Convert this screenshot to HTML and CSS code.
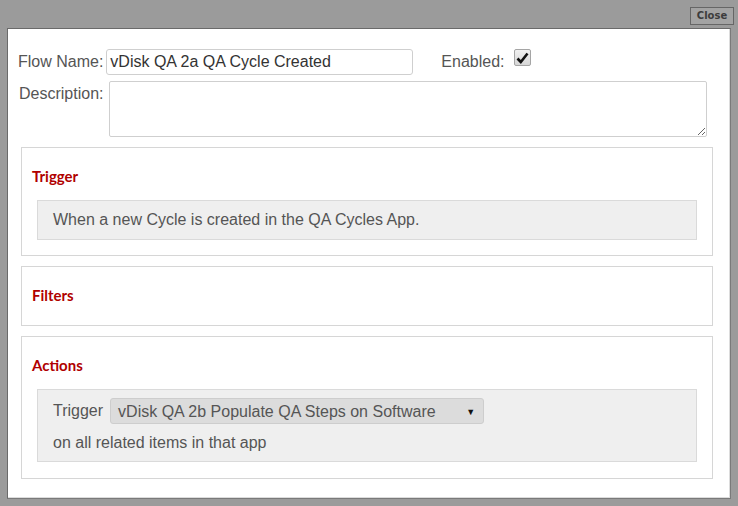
FILE: index.html
```html
<!DOCTYPE html>
<html>
<head>
<meta charset="utf-8">
<link rel="stylesheet" href="styles.css">
</head>
<body>
<div class="dialog">
  <div class="titlebar">
    <button class="close-btn">Close</button>
  </div>
  <div class="content">
    <div class="row name-row">
      <label class="lbl">Flow Name:</label>
      <div class="text-input">vDisk QA 2a QA Cycle Created</div>
      <label class="lbl enabled-lbl">Enabled:</label>
      <span class="checkbox">
        <svg width="13" height="12" viewBox="0 0 13 12"><path d="M1.5 6.5 L4.8 10 L11.5 1.5" fill="none" stroke="#111" stroke-width="2.6" stroke-linejoin="miter"/></svg>
      </span>
    </div>
    <div class="row desc-row">
      <label class="lbl">Description:</label>
      <textarea class="textarea"></textarea>
    </div>

    <div class="section">
      <h3 class="section-title">Trigger</h3>
      <div class="inner trigger-inner">When a new Cycle is created in the QA Cycles App.</div>
    </div>

    <div class="section section-empty">
      <h3 class="section-title">Filters</h3>
    </div>

    <div class="section section-actions">
      <h3 class="section-title">Actions</h3>
      <div class="inner actions-inner">
        <div class="action-row">
          <span class="plain">Trigger</span>
          <div class="select">
            <span>vDisk QA 2b Populate QA Steps on Software</span>
            <span class="arrow">&#9660;</span>
          </div>
        </div>
        <div class="plain action-note">on all related items in that app</div>
      </div>
    </div>
  </div>
</div>
</body>
</html>
```

FILE: styles.css
```css
html, body {
  margin: 0;
  padding: 0;
  background: #9b9b9b;
  width: 738px;
  height: 506px;
  overflow: hidden;
}

.dialog {
  font-family: "Liberation Sans", Arial, sans-serif;
  padding: 0 7px 0 7px;
}

.titlebar {
  height: 28px;
  display: flex;
  justify-content: flex-end;
  align-items: flex-start;
  margin-right: -3px;
}

.close-btn {
  margin-top: 7px;
  width: 44px;
  height: 18px;
  padding: 0;
  border: 1px solid #666;
  background: #a3a3a3;
  color: #3c3c3c;
  font-family: "DejaVu Sans", Verdana, sans-serif;
  font-weight: bold;
  font-size: 10px;
  line-height: 16px;
}

.content {
  background: #fff;
  height: 471px;
  box-sizing: border-box;
  border-top: 1px solid #6a6a6a;
  border-left: 1px solid #6a6a6a;
  border-right: 1px solid #7a7a7a;
  border-bottom: 1px solid #7a7a7a;
  box-shadow: inset -1px -1px 0 #dcdcdc;
  padding: 20px 18px 0 10px;
}

.row {
  display: flex;
  align-items: flex-start;
}

.lbl {
  font-size: 16px;
  color: #555;
  line-height: 26px;
}

.text-input {
  margin-left: 3px;
  width: 307px;
  height: 26px;
  box-sizing: border-box;
  border: 1px solid #cfcfcf;
  border-radius: 3px;
  font-size: 16px;
  color: #333;
  line-height: 24px;
  padding-left: 3px;
}

.enabled-lbl {
  margin-left: 28px;
  line-height: 26px;
}

.checkbox {
  margin-left: 9px;
  width: 17px;
  height: 17px;
  box-sizing: border-box;
  border: 1px solid #a5a5a5;
  border-radius: 2px;
  background: linear-gradient(#f0f0f0, #d6d6d6);
  display: flex;
  align-items: center;
  justify-content: center;
}

.desc-row {
  margin-top: 6px;
}

.desc-row .lbl {
  margin-left: 1px;
}

.textarea {
  margin: 0 0 0 6px;
  width: 598px;
  height: 56px;
  box-sizing: border-box;
  border: 1px solid #cfcfcf;
  border-radius: 2px;
  font-family: "Liberation Sans", Arial, sans-serif;
  font-size: 16px;
  padding: 2px;
}

.section {
  margin: 10px 0 0 3px;
  width: 692px;
  box-sizing: border-box;
  border: 1px solid #d6d6d6;
  padding: 16px 15px 15px;
}

.section-empty {
  padding-bottom: 18px;
}

.section-actions {
  padding-bottom: 16px;
}

.section-title {
  margin: 0 0 0 -5px;
  font-family: Lato, "Open Sans", sans-serif;
  font-weight: bold;
  font-size: 15px;
  line-height: 24px;
  color: #b00000;
}

.inner {
  margin-top: 12px;
  background: #efefef;
  border: 1px solid #dadada;
  color: #555;
  font-size: 16px;
}

.trigger-inner {
  padding: 10px 15px;
  line-height: 18px;
}

.actions-inner {
  padding: 8px 15px 9px;
}

.action-row {
  display: flex;
  align-items: center;
  height: 26px;
}

.plain {
  font-size: 16px;
  color: #555;
  line-height: 18px;
}

.select {
  margin-left: 7px;
  width: 374px;
  height: 26px;
  box-sizing: border-box;
  background: #dcdcdc;
  border: 1px solid #cdcdcd;
  border-radius: 3px;
  display: flex;
  align-items: center;
  justify-content: space-between;
  padding: 1px 8px 0 7px;
  color: #555;
  font-size: 16px;
}

.arrow {
  font-size: 9px;
  color: #111;
}

.action-note {
  margin-top: 10px;
}
```
